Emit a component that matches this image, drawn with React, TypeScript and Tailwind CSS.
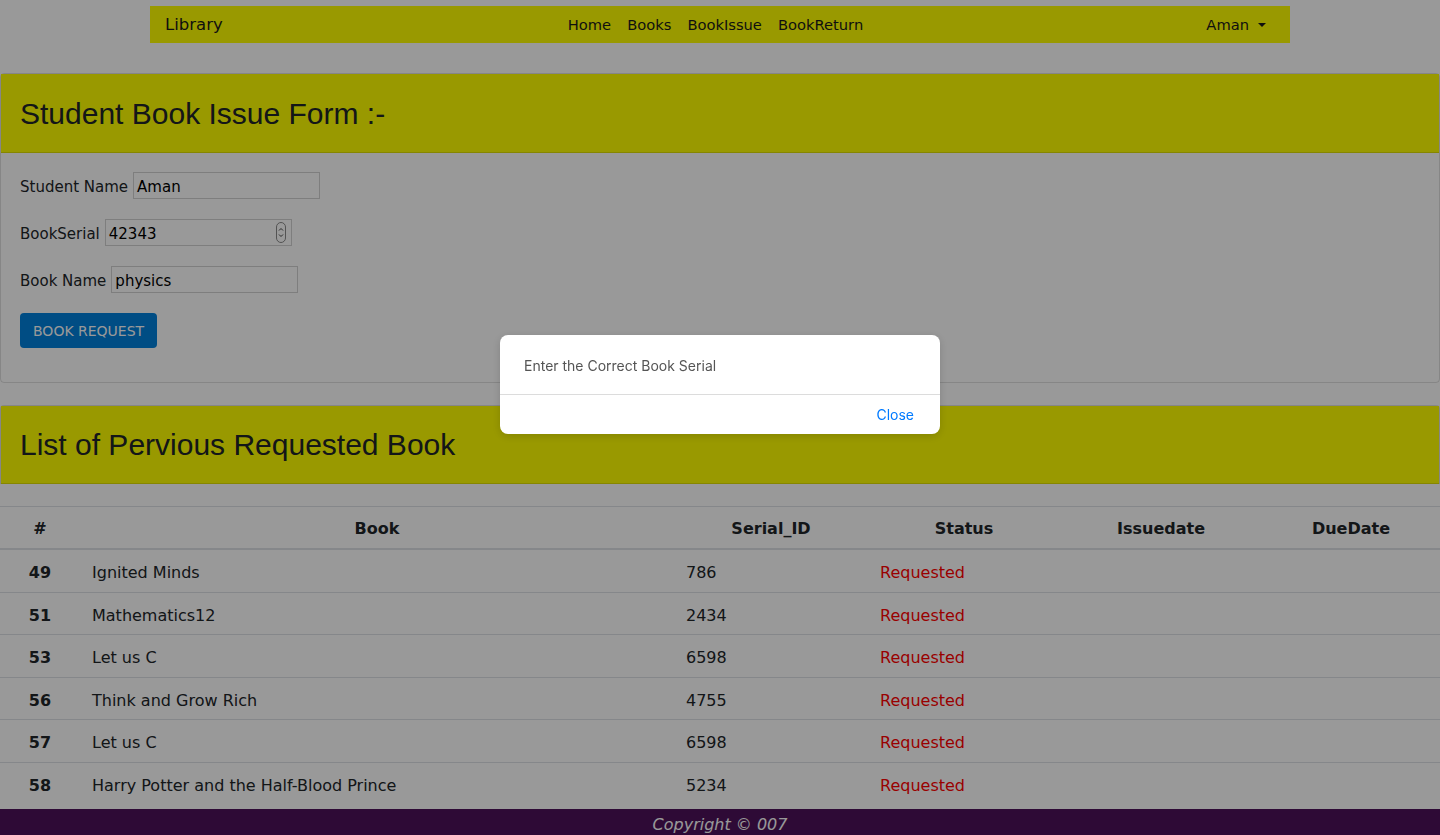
import React from "react"

const rows = [
  { id: 49, book: "Ignited Minds", serial: "786" },
  { id: 51, book: "Mathematics12", serial: "2434" },
  { id: 53, book: "Let us C", serial: "6598" },
  { id: 56, book: "Think and Grow Rich", serial: "4755" },
  { id: 57, book: "Let us C", serial: "6598" },
  { id: 58, book: "Harry Potter and the Half-Blood Prince", serial: "5234" },
]

function Spinner() {
  return (
    <svg width="10" height="21" viewBox="0 0 10 21" className="mr-[5px] shrink-0">
      <rect x="0.5" y="0.5" width="9" height="20" rx="4.5" fill="none" stroke="#8a8a8a" />
      <path d="M3 8.5 L5 6.5 L7 8.5" fill="none" stroke="#444" strokeWidth="1" />
      <path d="M3 12.5 L5 14.5 L7 12.5" fill="none" stroke="#444" strokeWidth="1" />
    </svg>
  )
}

function Field({ label, value, number }: { label: string; value: string; number?: boolean }) {
  return (
    <div className="flex h-[27px] items-center text-[15px]">
      <span className="mr-[5px] pt-[3px]">{label}</span>
      <div className="flex h-[27px] w-[187px] items-center justify-between border border-[#d3d3d3] bg-white pl-[3px] text-black">
        <span className="pt-[3px]">{value}</span>
        {number && <Spinner />}
      </div>
    </div>
  )
}

export default function App() {
  return (
    <div className="min-h-screen bg-white font-['DejaVu_Sans',Verdana,sans-serif] text-[#212529]">
      {/* navbar */}
      <nav className="mx-auto mt-[6px] grid h-[37px] w-[1140px] grid-cols-3 items-center bg-[#ffff00] pl-[15px] pr-[24px] pt-[2px] text-[#1a1a1a]">
        <div className="text-[16.5px]">Library</div>
        <div className="flex justify-center text-[14.7px]">
          <span className="px-2">Home</span>
          <span className="px-2">Books</span>
          <span className="px-2">BookIssue</span>
          <span className="px-2">BookReturn</span>
        </div>
        <div className="flex items-center justify-end text-[14.7px]">
          <span>Aman</span>
          <span className="ml-[9px] h-0 w-0 border-x-[4px] border-t-[4.5px] border-x-transparent border-t-[#1a1a1a]"></span>
        </div>
      </nav>

      {/* issue form */}
      <div className="mt-[30px] rounded-[4px] border border-black/[.125]">
        <div className="flex h-[79px] items-center border-b border-black/[.125] bg-[#ffff00] px-[19px]">
          <h2 className="font-['Liberation_Sans',Arial,sans-serif] text-[30px]">Student Book Issue Form :-</h2>
        </div>
        <div className="flex flex-col gap-5 px-[19px] pb-[34px] pt-[19px]">
          <Field label="Student Name" value="Aman" />
          <Field label="BookSerial" value="42343" number />
          <Field label="Book Name" value="physics" />
          <div>
            <button className="h-[35px] rounded-[4px] bg-[#0080dc] px-[13px] pt-[1px] text-[14px] text-white">BOOK REQUEST</button>
          </div>
        </div>
      </div>

      {/* previous list */}
      <div className="mt-[22px] rounded-t-[4px] border-x border-t border-black/[.125]">
        <div className="flex h-[78px] items-center border-b border-black/[.125] bg-[#ffff00] px-[19px]">
          <h2 className="font-['Liberation_Sans',Arial,sans-serif] text-[30px]">List of Pervious Requested Book</h2>
        </div>
      </div>

      <table className="mt-[22px] w-full table-fixed border-collapse text-[16px]">
        <colgroup>
          <col className="w-[80px]" />
          <col className="w-[594px]" />
          <col className="w-[194px]" />
          <col className="w-[192px]" />
          <col className="w-[202px]" />
          <col className="w-[178px]" />
        </colgroup>
        <thead>
          <tr>
            {["#", "Book", "Serial_ID", "Status", "Issuedate", "DueDate"].map((h) => (
              <th key={h} className="border-b-2 border-t border-[#dee2e6] px-3 pb-[7px] pt-[9px] text-center leading-[25px] font-bold">
                {h}
              </th>
            ))}
          </tr>
        </thead>
        <tbody>
          {rows.map((r) => (
            <tr key={r.id}>
              <td className="border-t border-[#dee2e6] px-3 pb-[6px] pt-[10px] text-center leading-[25.5px] font-bold">{r.id}</td>
              <td className="border-t border-[#dee2e6] px-3 pb-[6px] pt-[10px] leading-[25.5px]">{r.book}</td>
              <td className="border-t border-[#dee2e6] px-3 pb-[6px] pt-[10px] leading-[25.5px]">{r.serial}</td>
              <td className="border-t border-[#dee2e6] px-3 pb-[6px] pt-[10px] leading-[25.5px] text-[#ff0000]">Requested</td>
              <td className="border-t border-[#dee2e6] px-3 pb-[6px] pt-[10px] leading-[25.5px]"></td>
              <td className="border-t border-[#dee2e6] px-3 pb-[6px] pt-[10px] leading-[25.5px]"></td>
            </tr>
          ))}
        </tbody>
      </table>

      <footer className="mt-[5px] bg-[#4d115a] py-1 text-center text-[16px] italic leading-6 text-white">
        Copyright © 007
      </footer>

      {/* alert dialog */}
      <div className="fixed inset-0 flex items-start justify-center bg-black/40 pt-[335px]">
        <div className="w-[440px] rounded-[8px] bg-white font-['Inter',sans-serif] text-[14px] shadow-[0_2px_10px_rgba(0,0,0,0.15)]">
          <div className="px-6 pb-[18px] pt-[21px] leading-5 text-[#555]">Enter the Correct Book Serial</div>
          <div className="flex justify-end border-t border-[#dcdcdc] pb-[9px] pr-[26px] pt-[10px] leading-5">
            <span className="text-[#007aff]">Close</span>
          </div>
        </div>
      </div>
    </div>
  )
}
